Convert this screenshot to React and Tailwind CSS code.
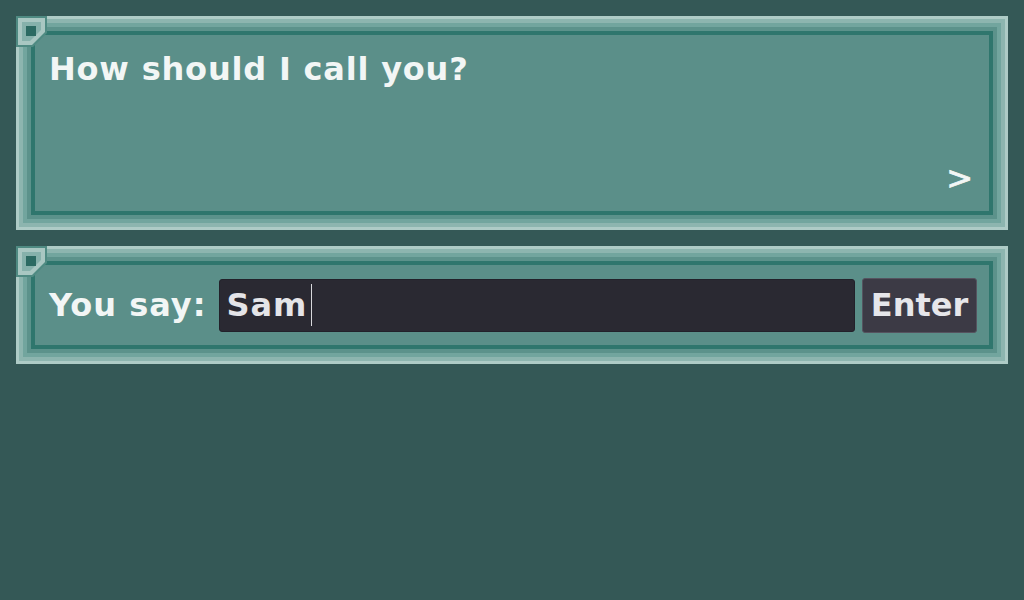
import React from "react";

// layered bevel frame used by both dialog boxes
const Frame = ({ children, fillClass }) => (
  <div className="relative border-[3px] border-[#aecbc6]">
    <div className="border-4 border-[#8db5af]">
      <div className="border-4 border-[#72a59e]">
        <div className="border-4 border-[#5c928b]">
          <div className="border-4 border-[#2f766d]">
            <div className={"bg-[#5b8f89] " + fillClass}>{children}</div>
          </div>
        </div>
      </div>
    </div>
    <svg
      className="absolute -left-[3px] -top-[3px]"
      width="32"
      height="32"
      viewBox="0 0 32 32"
    >
      <polygon points="0,0 31,0 31,17 17,31 0,31" fill="#4f8a82" />
      <polygon points="2,2 29,2 29,16 16,29 2,29" fill="#a9c7c2" />
      <polygon points="6,6 25,6 25,14 14,25 6,25" fill="#86b1ab" />
      <rect x="10" y="10" width="10" height="10" fill="#2c6a62" />
    </svg>
  </div>
);

const font = { fontFamily: '"DejaVu Sans", "Liberation Sans", sans-serif' };

export default function App() {
  return (
    <div
      className="w-full h-[600px] bg-[#345856] p-4 flex flex-col gap-4 text-[#f2f6f5]"
      style={font}
    >
      <Frame fillClass="h-[176px] flex flex-col pl-[14px] pr-[16px] pt-[14px] pb-[18px]">
        <p className="text-[32px] leading-[40px] font-bold tracking-[0.8px]">
          How should I call you?
        </p>
        <span className="mt-auto self-end text-[32px] leading-[30px] [-webkit-text-stroke:0.8px_#f2f6f5]">
          &gt;
        </span>
      </Frame>

      <Frame fillClass="h-[80px] flex items-center gap-[7px] pl-[14px] pr-[12px]">
        <span className="mr-[6px] text-[32px] leading-[40px] font-bold tracking-[1px] whitespace-nowrap">
          You say:
        </span>
        <div className="flex-1 h-[53px] bg-[#2a2932] border border-[#22212a] rounded-[3px] flex items-center pl-[6px]">
          <span className="text-[32px] leading-[40px] font-bold tracking-[1px] text-[#e4e4e8]">
            Sam
          </span>
          <span className="w-px h-[42px] bg-[#d8d8dc] ml-[4px]" />
        </div>
        <button
          className="h-[55px] w-[115px] bg-[#3c3a45] border border-[#55535f] rounded-[3px] text-[32px] leading-[40px] font-bold text-[#e6e6ea]"
          style={font}
        >
          Enter
        </button>
      </Frame>
    </div>
  );
}
